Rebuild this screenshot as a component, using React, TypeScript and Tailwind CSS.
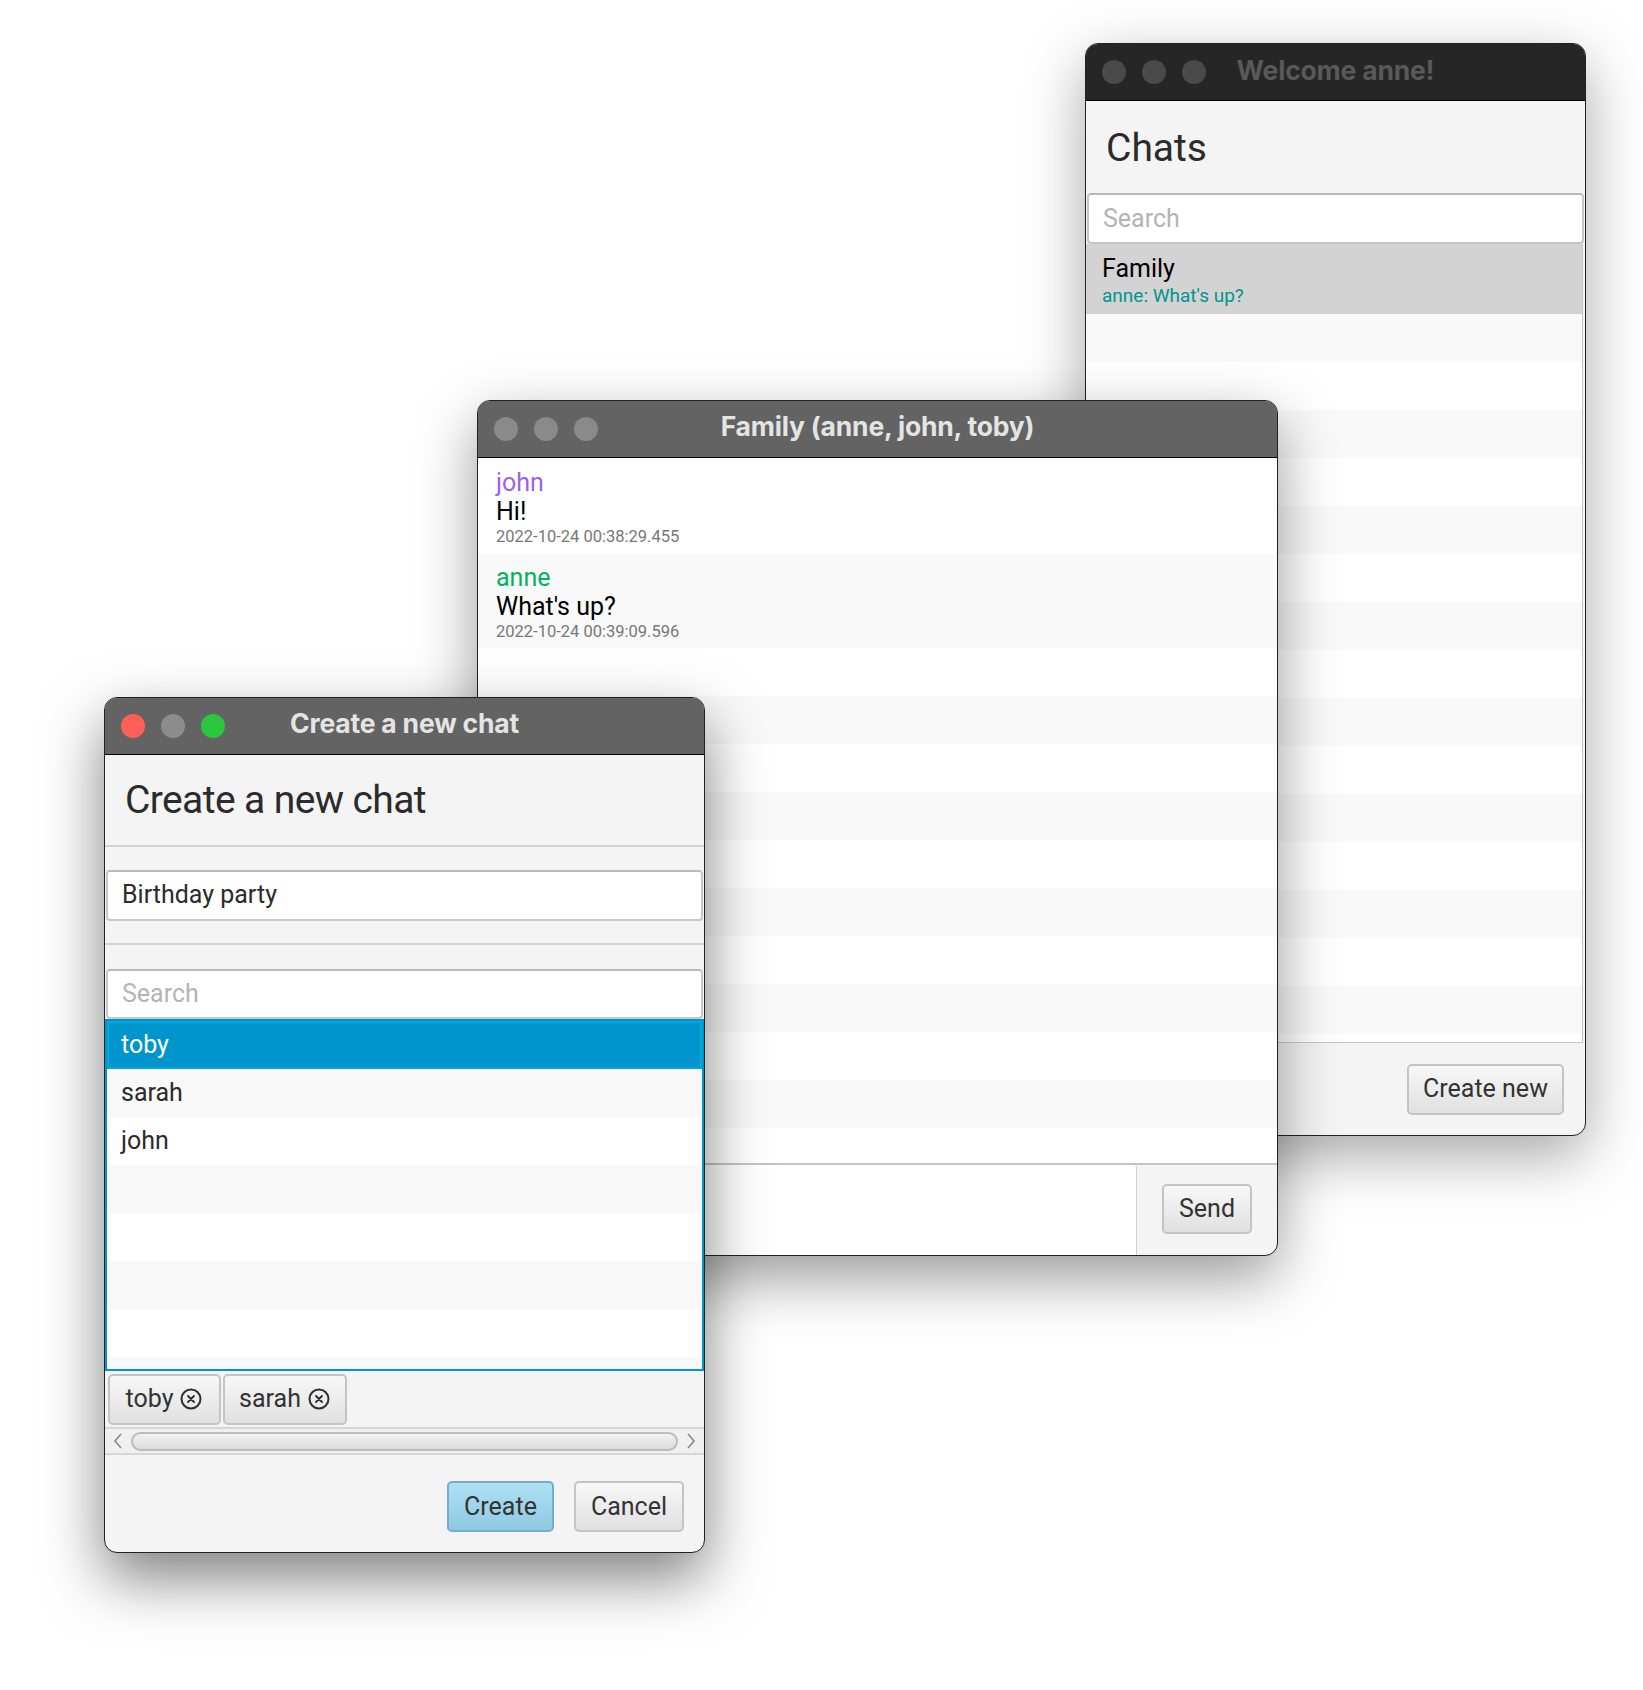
import React from "react"

const TrafficLights = ({ colors }: { colors: string[] }) => (
  <div className="absolute left-[16px] top-0 flex h-full items-center gap-[16px]">
    {colors.map((c, i) => (
      <div key={i} className={`h-[24px] w-[24px] rounded-full ${c}`} />
    ))}
  </div>
)

function Stripes({ count, startOdd }: { count: number; startOdd?: boolean }) {
  return (
    <>
      {Array.from({ length: count }).map((_, i) => {
        const odd = (i + (startOdd ? 1 : 0)) % 2 === 1
        return <div key={i} className={`h-[48px] shrink-0 ${odd ? "bg-[#f9f9f9]" : "bg-white"}`} />
      })}
    </>
  )
}

function CloseCircle() {
  return (
    <svg width="24" height="24" viewBox="0 0 24 24" className="ml-[6px]">
      <circle cx="12" cy="12" r="9.5" fill="none" stroke="#2e2e2e" strokeWidth="2" />
      <path d="M9 9 L15 15 M15 9 L9 15" stroke="#2e2e2e" strokeWidth="1.8" strokeLinecap="round" />
    </svg>
  )
}

const btn =
  "flex items-center justify-center rounded-[5px] border-2 border-[#c4c4c4] bg-gradient-to-b from-[#f8f8f8] to-[#e0e0e0] text-[25px] text-[#333]"

const titleText = "font-[Inter,sans-serif] text-[26.5px] font-bold tracking-[-0.2px]"

function WelcomeWindow() {
  return (
    <div className="absolute left-[1085px] top-[43px] flex h-[1093px] w-[501px] flex-col overflow-hidden rounded-[13px] border border-[#222] bg-[#f4f4f4] shadow-[0_20px_60px_rgba(0,0,0,0.35)]">
      {/* title */}
      <div className="relative flex h-[57px] shrink-0 items-center justify-center border-b border-black bg-[#262626] pb-[2px]">
        <TrafficLights colors={["bg-[#4a4a4a]", "bg-[#4a4a4a]", "bg-[#4a4a4a]"]} />
        <span className={`${titleText} text-[#595959]`}>Welcome anne!</span>
      </div>
      <div className="flex h-[92px] shrink-0 items-center pl-[20px] pt-[2px] text-[39px] text-[#2b2b2b]">Chats</div>
      <div className="mx-[1px] flex h-[51px] shrink-0 items-center rounded-[4px] border-2 border-[#c6c6c6] border-t-[#b8b8b8] bg-white pl-[14px] text-[25px] text-[#b4b4b4]">
        Search
      </div>
      {/* chat list */}
      <div className="mr-[2px] flex flex-1 flex-col overflow-hidden border-r border-b border-[#c8c8c8]">
        <div className="flex h-[70px] shrink-0 flex-col justify-center bg-[#d3d3d3] pl-[16px] pt-[3px]">
          <span className="text-[25px] leading-[30px] text-black">Family</span>
          <span className="text-[19px] leading-[24px] text-[#00968f]">anne: What's up?</span>
        </div>
        <Stripes count={16} startOdd />
      </div>
      <div className="flex h-[92px] shrink-0 items-center justify-end pr-[21px]">
        <div className={`${btn} h-[51px] w-[157px]`}>Create new</div>
      </div>
    </div>
  )
}

function Message({ name, color, text, time, bg }: { name: string; color: string; text: string; time: string; bg: string }) {
  return (
    <div className={`flex h-[95px] shrink-0 flex-col justify-center pl-[18px] pt-[4px] ${bg}`}>
      <span className={`text-[25px] leading-[28px] ${color}`}>{name}</span>
      <span className="text-[25px] leading-[30px] text-black">{text}</span>
      <span className="text-[16.5px] leading-[20px] text-[#777]">{time}</span>
    </div>
  )
}

function FamilyWindow() {
  return (
    <div className="absolute left-[477px] top-[400px] flex h-[856px] w-[801px] flex-col overflow-hidden rounded-[13px] border border-[#222] bg-[#f4f4f4] shadow-[0_22px_60px_rgba(0,0,0,0.4)]">
      <div className="relative flex h-[57px] shrink-0 items-center justify-center border-b border-black bg-[#636363] pb-[4px]">
        <TrafficLights colors={["bg-[#8a8a8a]", "bg-[#8a8a8a]", "bg-[#8a8a8a]"]} />
        <span className={`${titleText} text-[#e4e4e4]`}>Family (anne, john, toby)</span>
      </div>
      <div className="flex flex-1 flex-col overflow-hidden bg-white">
        <Message name="john" color="text-[#9b61e8]" text="Hi!" time="2022-10-24 00:38:29.455" bg="bg-white" />
        <Message name="anne" color="text-[#00b35f]" text="What's up?" time="2022-10-24 00:39:09.596" bg="bg-[#f9f9f9]" />
        <Stripes count={11} />
      </div>
      <div className="flex h-[92px] shrink-0 border-t-2 border-[#c4c4c4]">
        <div className="flex-1 rounded-tr-[3px] border-r border-[#d0d0d0] bg-white" />
        <div className="flex w-[140px] items-center justify-center pb-[2px]">
          <div className={`${btn} h-[50px] w-[90px]`}>Send</div>
        </div>
      </div>
    </div>
  )
}

function CreateWindow() {
  return (
    <div className="absolute left-[104px] top-[697px] flex h-[856px] w-[601px] flex-col overflow-hidden rounded-[13px] border border-[#222] bg-[#f4f4f4] shadow-[0_25px_60px_rgba(0,0,0,0.5)]">
      <div className="relative flex h-[57px] shrink-0 items-center justify-center border-b border-black bg-[#636363] pb-[4px]">
        <TrafficLights colors={["bg-[#fe5f57]", "bg-[#8c8c8c]", "bg-[#29c840]"]} />
        <span className={`${titleText} text-[#e4e4e4]`}>Create a new chat</span>
      </div>
      <div className="flex h-[92px] shrink-0 items-center border-b-2 border-[#d2d2d2] pl-[20px] pt-[1px] text-[39px] tracking-[-0.6px] text-[#2b2b2b]">
        Create a new chat
      </div>
      <div className="flex h-[98px] shrink-0 flex-col justify-center border-b-2 border-[#d2d2d2] px-[1px]">
        <div className="flex h-[51px] items-center rounded-[4px] border-2 border-[#c8c8c8] border-t-[#bababa] bg-white pl-[14px] text-[25px] text-[#2b2b2b]">
          Birthday party
        </div>
      </div>
      <div className="mx-[1px] mt-[24px] flex h-[50px] shrink-0 items-center rounded-[4px] border-2 border-[#c8c8c8] border-t-[#bababa] bg-white pl-[14px] text-[25px] text-[#b4b4b4]">
        Search
      </div>
      {/* users list */}
      <div className="flex h-[352px] shrink-0 flex-col overflow-hidden border-2 border-[#0096c9] bg-white">
        <div className="flex h-[48px] shrink-0 items-center border-2 border-[#00a8de] bg-[#0096cd] pl-[12px] text-[25px] text-white">toby</div>
        <div className="flex h-[48px] shrink-0 items-center bg-[#f9f9f9] pl-[14px] text-[25px] text-[#2b2b2b]">sarah</div>
        <div className="flex h-[48px] shrink-0 items-center bg-white pl-[14px] text-[25px] text-[#2b2b2b]">john</div>
        <Stripes count={5} startOdd />
      </div>
      {/* chips */}
      <div className="flex h-[56px] shrink-0 items-center gap-[2px] pl-[3px]">
        <div className={`${btn} h-[51px] w-[113px] from-[#f4f4f4] to-[#dedede]`}>
          toby
          <CloseCircle />
        </div>
        <div className={`${btn} h-[51px] w-[124px] from-[#f4f4f4] to-[#dedede]`}>
          sarah
          <CloseCircle />
        </div>
      </div>
      {/* scrollbar */}
      <div className="flex h-[28px] shrink-0 items-center border-y-2 border-[#d6d6d6] bg-[#f0f0f0] px-[6px]">
        <svg width="14" height="18" viewBox="0 0 14 18">
          <path d="M10 2 L4 9 L10 16" fill="none" stroke="#888" strokeWidth="1.6" />
        </svg>
        <div className="mx-[6px] h-[19px] flex-1 rounded-full border-2 border-[#bcbcbc] bg-gradient-to-b from-[#f2f2f2] to-[#dcdcdc]" />
        <svg width="14" height="18" viewBox="0 0 14 18">
          <path d="M4 2 L10 9 L4 16" fill="none" stroke="#888" strokeWidth="1.6" />
        </svg>
      </div>
      <div className="flex flex-1 items-center justify-end gap-[20px] pr-[20px] pt-[6px]">
        <div className="flex h-[51px] w-[107px] items-center justify-center rounded-[5px] border-2 border-[#74aec9] bg-gradient-to-b from-[#aee0f3] to-[#8ecae2] text-[25px] text-[#333]">
          Create
        </div>
        <div className={`${btn} h-[51px] w-[110px]`}>Cancel</div>
      </div>
    </div>
  )
}

export default function App() {
  return (
    <div className="relative h-[1690px] w-[1643px] overflow-hidden bg-white font-[Roboto,sans-serif]">
      <WelcomeWindow />
      <FamilyWindow />
      <CreateWindow />
    </div>
  )
}
